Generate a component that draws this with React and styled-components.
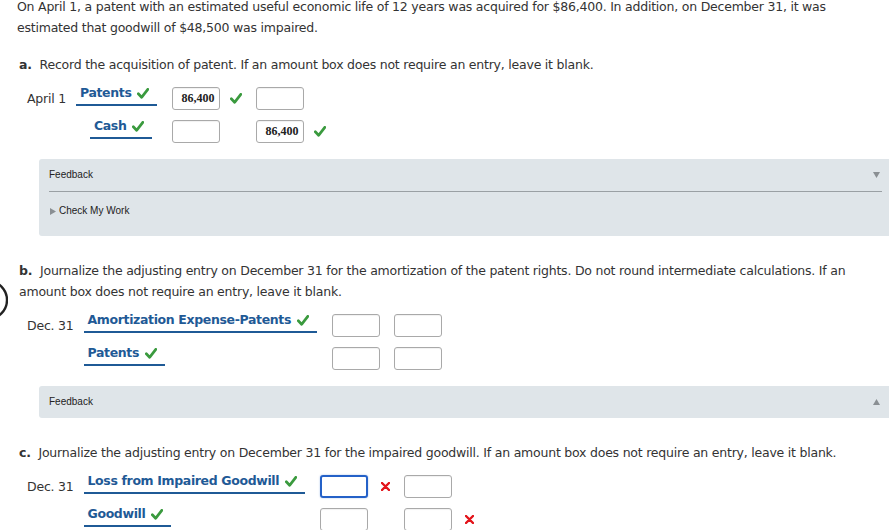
import React from "react";
import styled, { createGlobalStyle } from "styled-components";

const GlobalStyle = createGlobalStyle`
  html, body {
    margin: 0;
    padding: 0;
    background: #fff;
    overflow: hidden;
  }
  body {
    font-family: "DejaVu Sans", Verdana, sans-serif;
    color: #333;
  }
`;

const Page = styled.div`
  position: relative;
  width: 893px;
  padding: 0 0 0 17px;
  margin-top: -4px;
  box-sizing: border-box;
`;

const Para = styled.p`
  margin: 0;
  font-size: 12.5px;
  letter-spacing: -0.22px;
  line-height: 21px;
  padding-right: 40px;
`;

const Question = styled(Para)`
  margin-top: ${(p) => p.$top || 0}px;
  padding-left: 2px;

  b {
    font-weight: bold;
    margin-right: 4px;
  }
`;

const Journal = styled.div`
  display: grid;
  grid-template-columns: auto auto auto auto;
  justify-content: start;
  align-items: center;
  row-gap: 10px;
  margin: 12px 0 0 10px;
`;

const DateLabel = styled.div`
  font-size: 12.5px;
  letter-spacing: -0.22px;
  padding-right: 10px;
  white-space: nowrap;
`;

const AccountCell = styled.div`
  align-self: start;
  margin-top: -5px;
  padding-right: 15px;
  padding-left: ${(p) => p.$indent || 0}px;
`;

const Account = styled.div`
  display: inline-flex;
  align-items: center;
  gap: 6px;
  font-size: 12.5px;
  letter-spacing: -0.36px;
  font-weight: bold;
  line-height: 16px;
  color: #1f5a96;
  padding: 0 8px 3px 4px;
  border-bottom: 2px solid #1f5a96;
  white-space: nowrap;
`;

const AmountCell = styled.div`
  display: flex;
  align-items: center;
  margin-right: 14px;
`;

const Box = styled.div`
  width: 48px;
  height: 23px;
  box-sizing: border-box;
  border: ${(p) => (p.$focus ? "2px solid #2461c8" : "1px solid #a9a9a9")};
  border-radius: 3px;
  box-shadow: ${(p) =>
    p.$focus ? "0 0 2px rgba(36,97,200,0.4)" : "inset 0 1px 1px rgba(0,0,0,0.06)"};
  font-family: "Liberation Serif", "Times New Roman", serif;
  font-size: 12px;
  font-weight: bold;
  color: #222;
  text-align: right;
  line-height: 21px;
  padding-right: 5px;
`;

const MarkSlot = styled.div`
  width: 22px;
  display: flex;
  justify-content: flex-end;
  align-items: center;
`;

const Panel = styled.div`
  margin: ${(p) => p.$top}px 0 0 22px;
  width: 854px;
  background: #dfe5e9;
  border-radius: 3px;
  font-family: "Liberation Sans", Arial, sans-serif;
  font-size: 10px;
  color: #222;
`;

const PanelHead = styled.div`
  display: flex;
  justify-content: space-between;
  align-items: center;
  padding: 10px 13px 10px 10px;
  line-height: 12px;
`;

const Rule = styled.div`
  height: 1px;
  background: #9aa0a4;
  margin: 0 11px 0 10px;
`;

const CheckWork = styled.div`
  display: flex;
  align-items: center;
  gap: 2px;
  padding: 13px 10px 19px 11px;
  line-height: 12px;
`;

const Circle = styled.svg`
  position: absolute;
  left: -32px;
  top: 283px;
`;

const Check = () => (
  <svg width="12" height="11" viewBox="0 0 12 11">
    <path d="M1.3 5.8 L4.6 9.3 L10.8 1.3" fill="none" stroke="#3a9a3e" strokeWidth="2.7" strokeLinecap="round" strokeLinejoin="round" />
  </svg>
);

const Cross = () => (
  <svg width="9" height="9" viewBox="0 0 9 9">
    <path d="M1 1 L8 8 M8 1 L1 8" stroke="#e3141a" strokeWidth="2.4" strokeLinecap="round" />
  </svg>
);

const Tri = ({ dir }) => {
  const d =
    dir === "down" ? "M0 0 L7 0 L3.5 6 Z" : dir === "up" ? "M0 6 L7 6 L3.5 0 Z" : "M0 0 L6 3.5 L0 7 Z";
  return (
    <svg width="7" height="7" viewBox="0 0 7 7">
      <path d={d} fill="#8a8f93" />
    </svg>
  );
};

const Mark = ({ type }) => {
  if (type === "check") return <Check />;
  if (type === "cross") return <Cross />;
  return null;
};

const Amount = ({ data, slot }) => (
  <AmountCell>
    <Box $focus={data.focus}>{data.value}</Box>
    {slot && (
      <MarkSlot>
        <Mark type={data.mark} />
      </MarkSlot>
    )}
  </AmountCell>
);

const JournalTable = ({ rows }) => {
  const debitSlot = rows.some((r) => r.debit.mark);
  const creditSlot = rows.some((r) => r.credit.mark);
  return (
    <Journal>
      {rows.map((r, i) => (
        <React.Fragment key={i}>
          <DateLabel>{r.date}</DateLabel>
          <AccountCell $indent={r.indent}>
            <Account>
              {r.account}
              <Check />
            </Account>
          </AccountCell>
          <Amount data={r.debit} slot={debitSlot} />
          <Amount data={r.credit} slot={creditSlot} />
        </React.Fragment>
      ))}
    </Journal>
  );
};

const entriesA = [
  { date: "April 1", account: "Patents", debit: { value: "86,400", mark: "check" }, credit: {} },
  { date: "", account: "Cash", indent: 14, debit: {}, credit: { value: "86,400", mark: "check" } },
];

const entriesB = [
  { date: "Dec. 31", account: "Amortization Expense-Patents", debit: {}, credit: {} },
  { date: "", account: "Patents", debit: {}, credit: {} },
];

const entriesC = [
  { date: "Dec. 31", account: "Loss from Impaired Goodwill", debit: { focus: true, mark: "cross" }, credit: {} },
  { date: "", account: "Goodwill", debit: {}, credit: { mark: "cross" } },
];

export default function App() {
  return (
    <>
      <GlobalStyle />
      <Page>
        <Circle width="40" height="42" viewBox="0 0 40 42">
          <circle cx="20" cy="21" r="19" fill="none" stroke="#222" strokeWidth="2.4" />
        </Circle>
        <Para>
          On April 1, a patent with an estimated useful economic life of 12 years was acquired for $86,400. In addition, on December 31, it was estimated that goodwill of $48,500 was impaired.
        </Para>
        <Question $top={16}>
          <b>a.</b> Record the acquisition of patent. If an amount box does not require an entry, leave it blank.
        </Question>
        <JournalTable rows={entriesA} />
        <Panel $top={16}>
          <PanelHead>
            <span>Feedback</span>
            <Tri dir="down" />
          </PanelHead>
          <Rule />
          <CheckWork>
            <Tri dir="right" />
            <span>Check My Work</span>
          </CheckWork>
        </Panel>
        <Question $top={24}>
          <b>b.</b> Journalize the adjusting entry on December 31 for the amortization of the patent rights. Do not round intermediate calculations. If an amount box does not require an entry, leave it blank.
        </Question>
        <JournalTable rows={entriesB} />
        <Panel $top={16}>
          <PanelHead>
            <span>Feedback</span>
            <Tri dir="up" />
          </PanelHead>
        </Panel>
        <Question $top={24}>
          <b>c.</b> Journalize the adjusting entry on December 31 for the impaired goodwill. If an amount box does not require an entry, leave it blank.
        </Question>
        <JournalTable rows={entriesC} />
      </Page>
    </>
  );
}
